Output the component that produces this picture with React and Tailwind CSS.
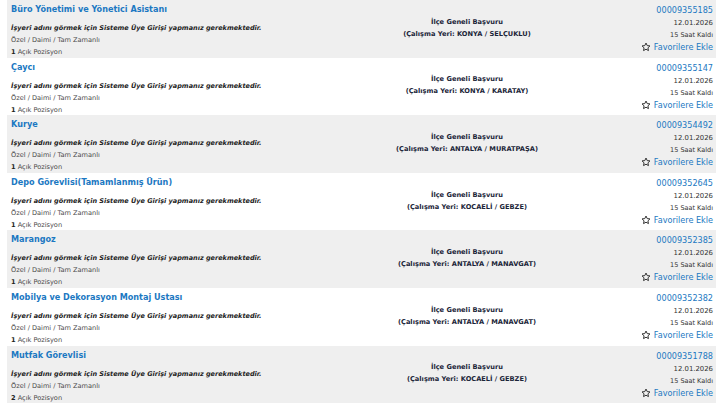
import React from 'react';

const jobs = [
    { title: 'Büro Yönetimi ve Yönetici Asistanı', place: 'KONYA / SELÇUKLU', id: '00009355185', count: 1 },
    { title: 'Çaycı', place: 'KONYA / KARATAY', id: '00009355147', count: 1 },
    { title: 'Kurye', place: 'ANTALYA / MURATPAŞA', id: '00009354492', count: 1 },
    { title: 'Depo Görevlisi(Tamamlanmış Ürün)', place: 'KOCAELİ / GEBZE', id: '00009352645', count: 1 },
    { title: 'Marangoz', place: 'ANTALYA / MANAVGAT', id: '00009352385', count: 1 },
    { title: 'Mobilya ve Dekorasyon Montaj Ustası', place: 'ANTALYA / MANAVGAT', id: '00009352382', count: 1 },
    { title: 'Mutfak Görevlisi', place: 'KOCAELİ / GEBZE', id: '00009351788', count: 2 },
];

const Star = () => (
    <svg width="10" height="10" viewBox="0 0 24 24" fill="none" stroke="#333" strokeWidth="2.4" strokeLinejoin="round">
        <path d="M12 2.5l2.9 6.1 6.6.8-4.9 4.6 1.3 6.6L12 17.3l-5.9 3.3 1.3-6.6-4.9-4.6 6.6-.8z" />
    </svg>
);

const JobRow = ({ job, odd }) => (
    <div className={`flex h-[57.6px] ${odd ? 'bg-white' : 'bg-[#efefef]'}`}>
        {/* Sol: ilan bilgisi */}
        <div className="w-[330px] pl-[4px] pt-[2px] flex flex-col whitespace-nowrap">
            <a className="text-[8.1px] font-bold text-[#1b78c2] leading-[14px]">{job.title}</a>
            <p className="mt-[7px] text-[6.5px] font-bold italic text-[#222] leading-[10px]">
                İşyeri adını görmek için Sisteme Üye Girişi yapmanız gerekmektedir.
            </p>
            <p className="mt-[1px] text-[6.6px] text-[#4a4a4a] leading-[12px]">Özel / Daimi / Tam Zamanlı</p>
            <p className="text-[6.6px] text-[#4a4a4a] leading-[12px]">
                <b className="text-[#222]">{job.count}</b> Açık Pozisyon
            </p>
        </div>

        {/* Orta: çalışma yeri */}
        <div className="flex-1 flex flex-col items-center justify-center pb-[2px] text-[6.65px] font-bold text-[#1a2438] leading-[12px] whitespace-nowrap">
            <span>İlçe Geneli Başvuru</span>
            <span>(Çalışma Yeri: {job.place})</span>
        </div>

        {/* Sağ: ilan no, tarih */}
        <div className="w-[119px] pr-[3px] pt-[3px] flex flex-col items-end whitespace-nowrap">
            <a className="text-[8.1px] text-[#1b78c2] leading-[14px]">{job.id}</a>
            <span className="text-[6.9px] text-[#333] leading-[12px]">12.01.2026</span>
            <span className="text-[6.5px] text-[#333] leading-[12px]">15 Saat Kaldı</span>
            <a className="flex items-center gap-[3px] text-[8.1px] text-[#1b78c2] leading-[12px]">
                <Star /> Favorilere Ekle
            </a>
        </div>
    </div>
);

export default function App() {
    return (
        <div className="w-[720px] h-[406px] bg-white overflow-hidden" style={{ fontFamily: '"DejaVu Sans", Verdana, sans-serif' }}>
            <div className="ml-[7px] mr-[4px]">
                {jobs.map((job, i) => (
                    <JobRow key={job.id} job={job} odd={i % 2 === 1} />
                ))}
            </div>
        </div>
    );
}
